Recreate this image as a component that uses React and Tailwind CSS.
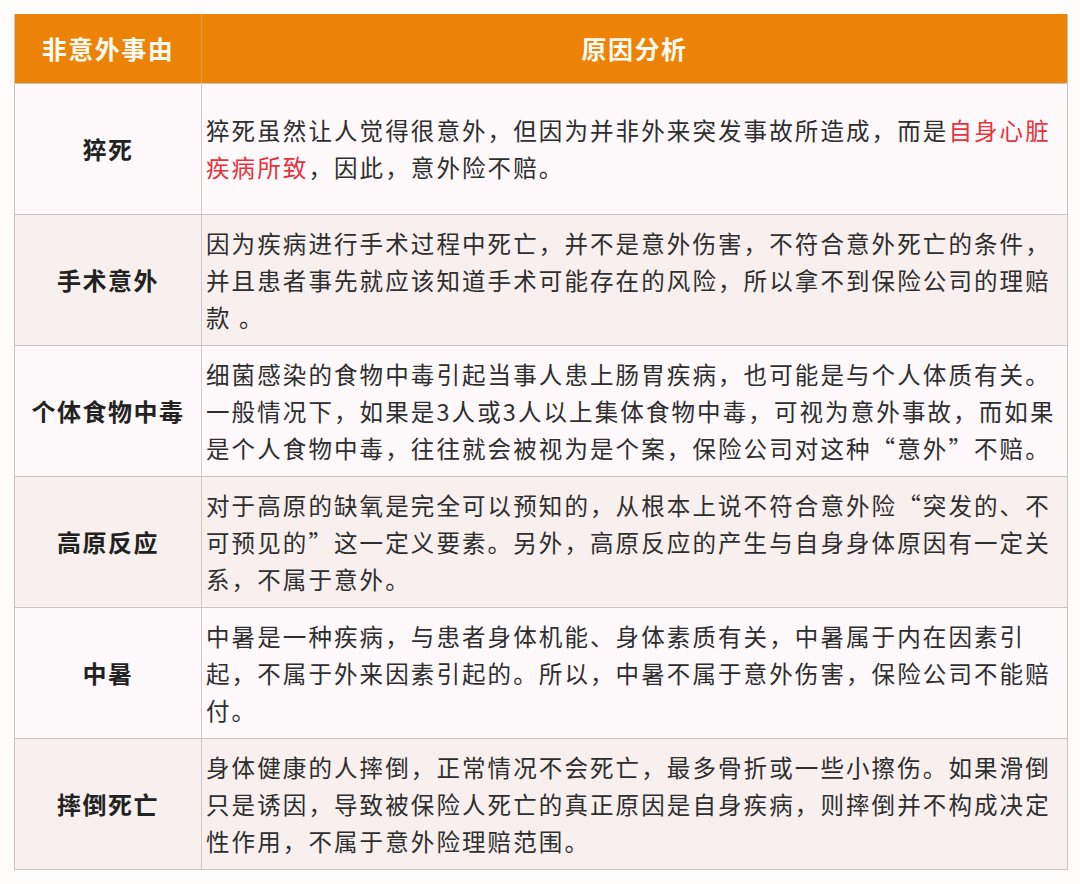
import React from "react";

const rows = [
  {
    name: "猝死",
    lines: [
      <>
        猝死虽然让人觉得很意外，但因为并非外来突发事故所造成，而是
        <span className="text-[#e8323c]">自身心脏</span>
      </>,
      <>
        <span className="text-[#e8323c]">疾病所致</span>，因此，意外险不赔。
      </>,
    ],
  },
  {
    name: "手术意外",
    lines: [
      "因为疾病进行手术过程中死亡，并不是意外伤害，不符合意外死亡的条件，",
      "并且患者事先就应该知道手术可能存在的风险，所以拿不到保险公司的理赔",
      "款 。",
    ],
  },
  {
    name: "个体食物中毒",
    lines: [
      "细菌感染的食物中毒引起当事人患上肠胃疾病，也可能是与个人体质有关。",
      "一般情况下，如果是3人或3人以上集体食物中毒，可视为意外事故，而如果",
      "是个人食物中毒，往往就会被视为是个案，保险公司对这种“意外”不赔。",
    ],
  },
  {
    name: "高原反应",
    lines: [
      "对于高原的缺氧是完全可以预知的，从根本上说不符合意外险“突发的、不",
      "可预见的”这一定义要素。另外，高原反应的产生与自身身体原因有一定关",
      "系，不属于意外。",
    ],
  },
  {
    name: "中暑",
    lines: [
      "中暑是一种疾病，与患者身体机能、身体素质有关，中暑属于内在因素引",
      "起，不属于外来因素引起的。所以，中暑不属于意外伤害，保险公司不能赔",
      "付。",
    ],
  },
  {
    name: "摔倒死亡",
    lines: [
      "身体健康的人摔倒，正常情况不会死亡，最多骨折或一些小擦伤。如果滑倒",
      "只是诱因，导致被保险人死亡的真正原因是自身疾病，则摔倒并不构成决定",
      "性作用，不属于意外险理赔范围。",
    ],
  },
];

export default function App() {
  return (
    <div
      className="w-[1080px] h-[884px] bg-[#fdfcfa] pt-[14px] pl-[14px]"
      style={{ fontFamily: '"Noto Sans CJK SC", "Noto Sans", sans-serif' }}
    >
      <div className="w-[1054px] border border-[#c9c3c2] border-t-0">
        <div className="flex h-[69px] bg-[#ec8306] text-[#fffaf2] font-bold text-[25px] tracking-[1.5px]">
          <div className="w-[187px] shrink-0 flex items-center justify-center border-r border-[#d99a5a]">
            非意外事由
          </div>
          <div className="flex-1 flex items-center justify-center">原因分析</div>
        </div>
        {rows.map((row, i) => (
          <div
            key={row.name}
            className={
              "flex h-[131px] border-t border-[#c9c3c2] " +
              (i % 2 === 0 ? "bg-[#fdf9fb]" : "bg-[#f7f0ee]")
            }
          >
            <div className="w-[187px] shrink-0 flex items-center justify-center border-r border-[#cfcaca] font-bold text-[24px] tracking-[1.5px] text-[#222]">
              {row.name}
            </div>
            <div className="flex-1 min-w-0 overflow-hidden flex flex-col justify-center pl-[4px] text-[23.5px] leading-[37px] tracking-[2.1px] text-[#2e2e2e]">
              {row.lines.map((line, j) => (
                <div key={j} className="whitespace-nowrap">
                  {line}
                </div>
              ))}
            </div>
          </div>
        ))}
      </div>
    </div>
  );
}
